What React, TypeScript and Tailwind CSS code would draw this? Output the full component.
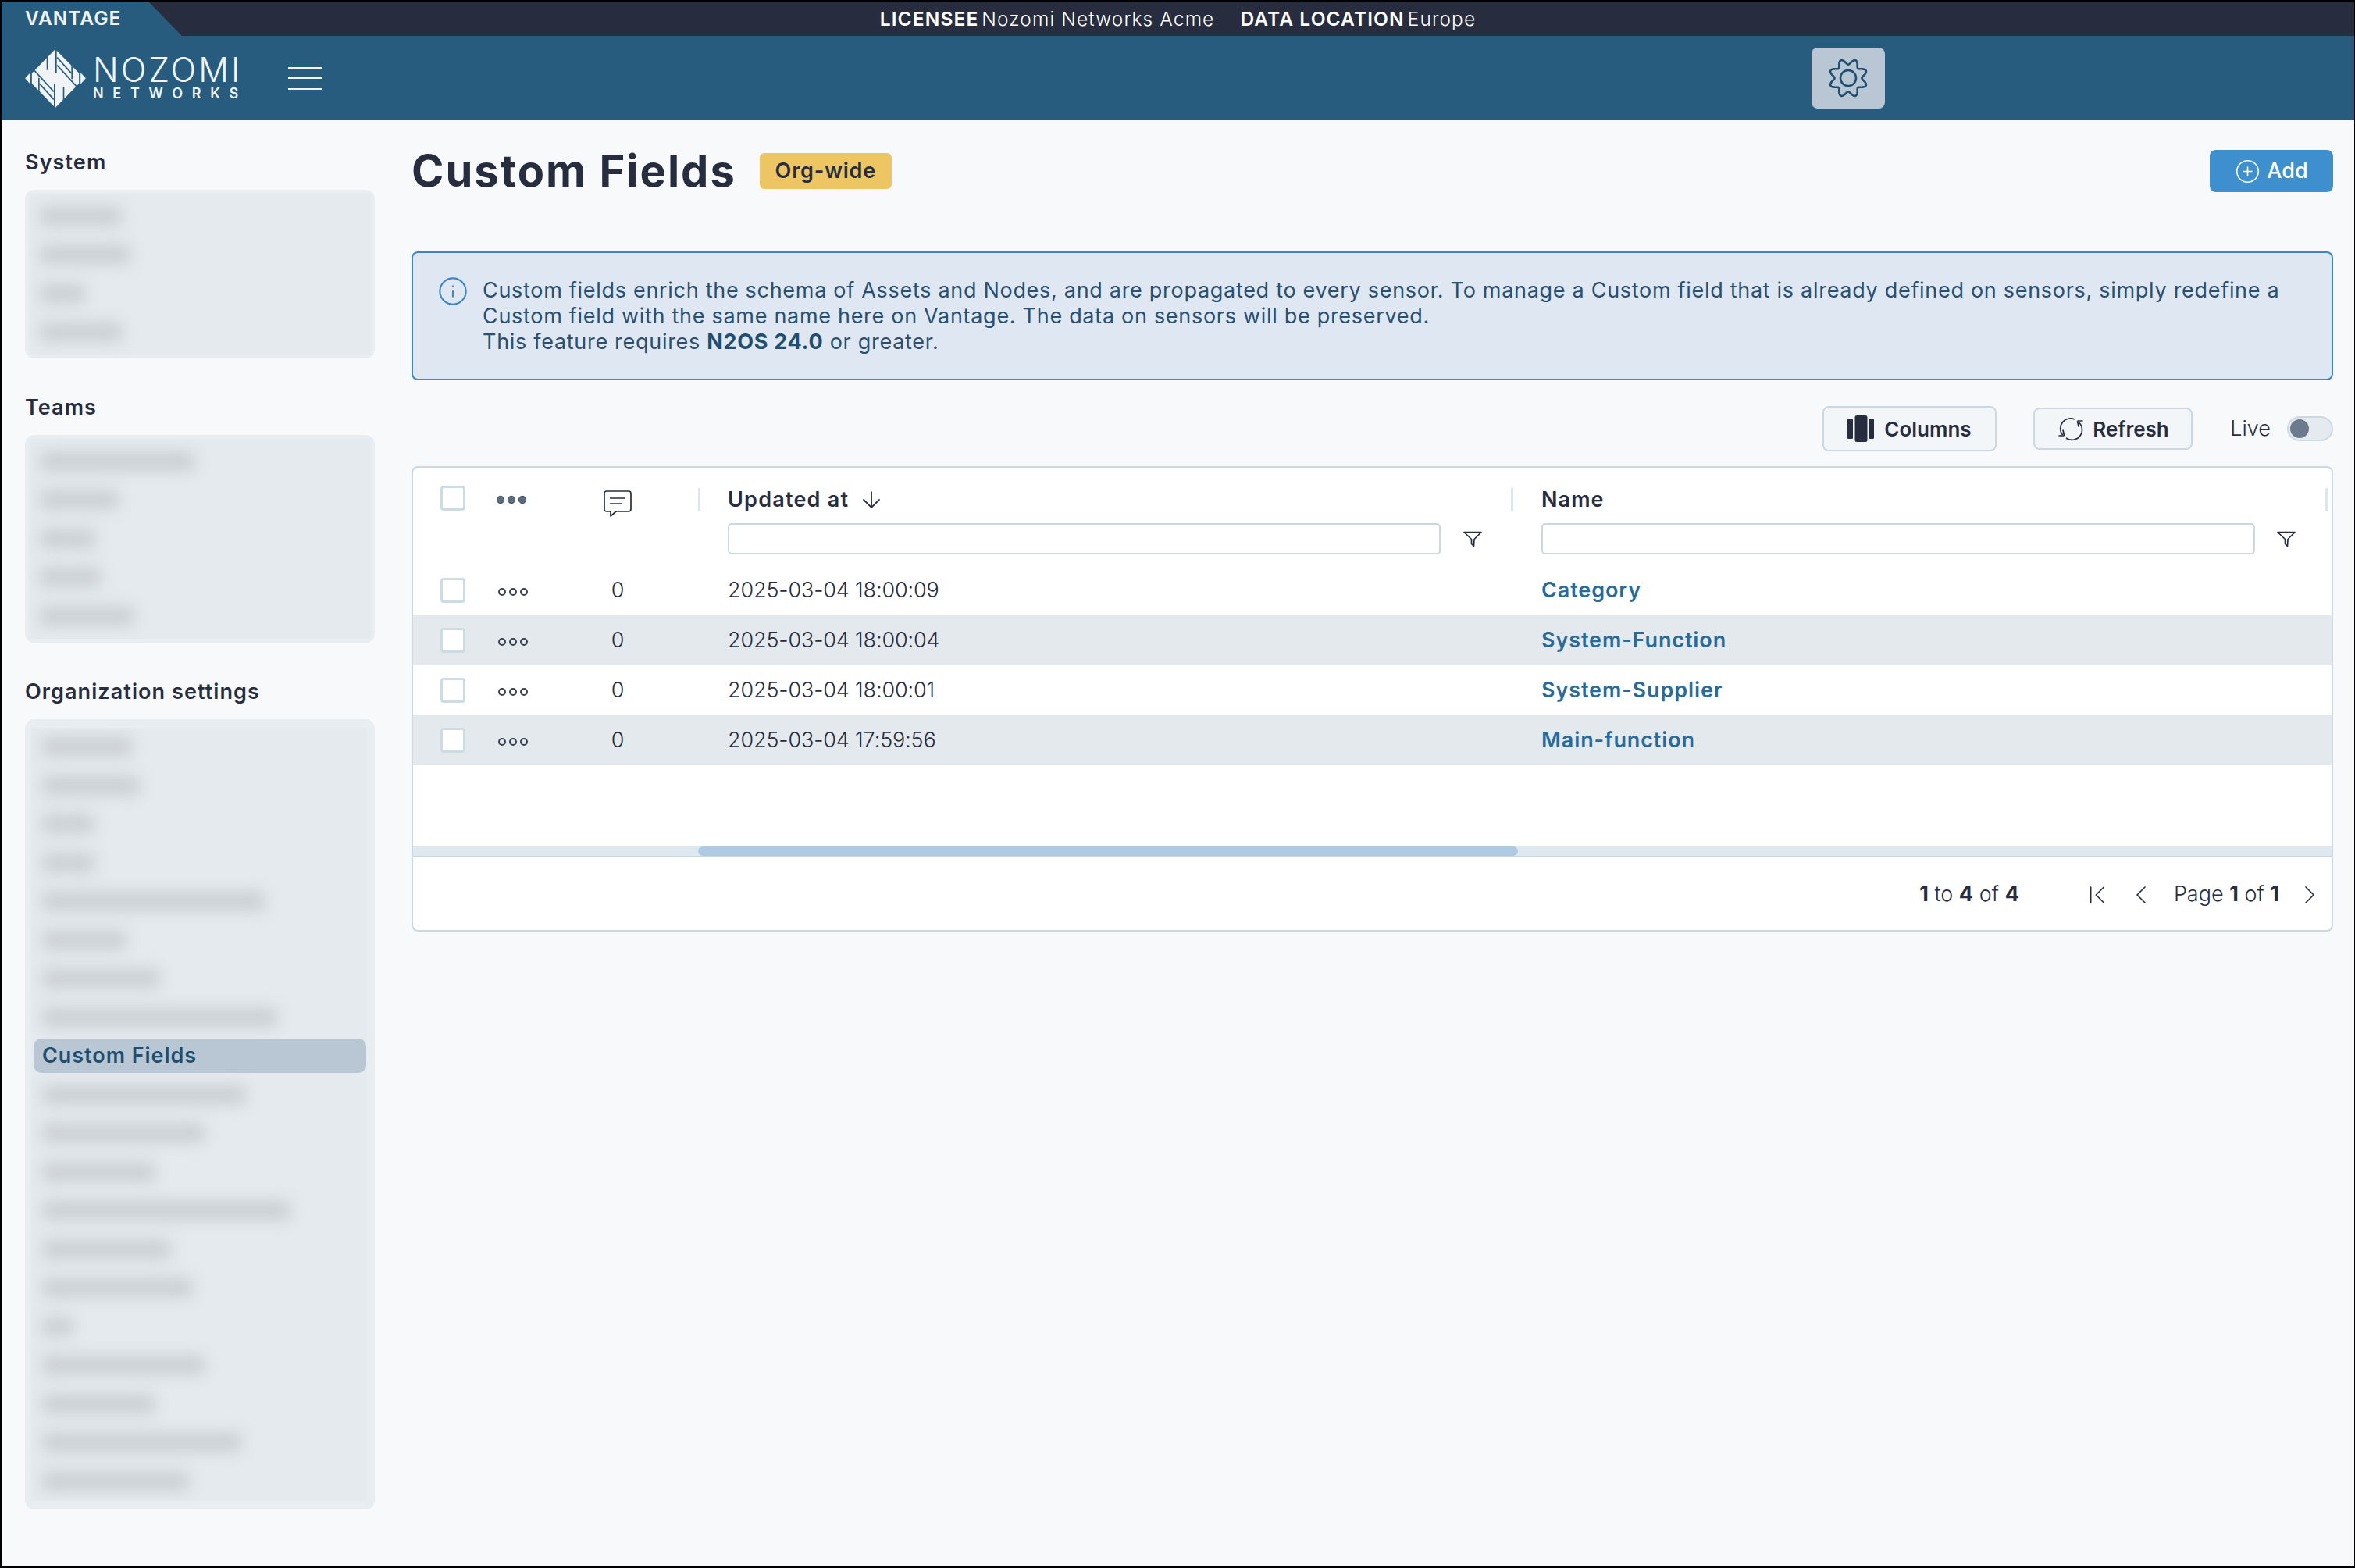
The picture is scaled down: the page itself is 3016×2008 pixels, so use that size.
import { ArrowDown, ChevronFirst, ChevronLeft, ChevronRight, CirclePlus, Info } from 'lucide-react';

const gearPath = (() => {
  const pts: string[] = [];
  for (let i = 0; i < 240; i++) {
    const a = (i / 240) * Math.PI * 2;
    const r = 21 + 3.6 * Math.cos(8 * a + Math.PI);
    pts.push(`${(26 + r * Math.cos(a)).toFixed(2)} ${(26 + r * Math.sin(a)).toFixed(2)}`);
  }
  return `M${pts.join('L')}Z`;
})();

function LogoMark() {
  return (
    <svg width="78" height="75" viewBox="0 0 233 225" className="shrink-0">
      <polygon points="0,112 20,90 20,134" fill="#f0f4f7" />
      <polygon points="233,112 213,90 213,134" fill="#f0f4f7" />
      <polygon points="116,0 207,92 207,132 116,225 26,132 26,92" fill="#f0f4f7" />
      <g stroke="#275c7f" strokeWidth="5" fill="none">
        <path d="M119 -4V92" />
        <path d="M113 132V229" />
        <path d="M85 30V80" />
        <path d="M148 145V195" />
        <path d="M53 110V165" />
        <path d="M180 60V115" />
        <path d="M28 74L110 163" />
        <path d="M205 151L123 62" />
        <path d="M56 133L110 193" />
        <path d="M177 92L123 32" />
      </g>
    </svg>
  );
}

function FilterIcon() {
  return (
    <svg width="24" height="21" viewBox="0 0 24 21" fill="none" stroke="#272d3e" strokeWidth="1.7" strokeLinejoin="round" className="shrink-0">
      <path d="M1 1.5H23L14 10.5L13.5 19.5L10.5 16.5V10.5Z" />
    </svg>
  );
}

function CheckBox() {
  return <div className="w-[32px] h-[32px] bg-white border-[3px] border-b-[4px] border-[#cfdbe3] rounded-[4px]" />;
}

function Dots({ solid }: { solid?: boolean }) {
  return (
    <svg width="42" height="14" viewBox="0 0 42 14">
      {[7, 21, 35].map((x) =>
        solid ? (
          <circle key={x} cx={x - 2} cy="7" r="4.7" fill="#5c6b7d" stroke="#3f4c5e" strokeWidth="1" />
        ) : (
          <circle key={x} cx={x} cy="7" r="4" fill="none" stroke="#3a4354" strokeWidth="2" />
        ),
      )}
    </svg>
  );
}

function BlurRows({ widths }: { widths: string[] }) {
  return (
    <>
      {widths.map((w, i) =>
        w === 'active' ? (
          <div key={i} className="h-[49.5px] flex items-center pl-[3px] pr-[1px]">
            <div className="w-full h-[44px] rounded-[10px] bg-[#b9c7d5] flex items-center pl-[11px] text-[27px] font-semibold text-[#1f4e6e] tracking-[0.035em]">
              Custom Fields
            </div>
          </div>
        ) : (
          <div key={i} className="h-[49.5px] flex items-center">
            <div className={`h-[24px] ml-[14px] rounded-[6px] bg-[#c9ced2] blur-[10px] ${w}`} />
          </div>
        ),
      )}
    </>
  );
}

function SideSection({ title, widths, mt, pad, innerPad }: { title: string; widths: string[]; mt: string; pad: string; innerPad: string }) {
  return (
    <>
      <div className={`h-[36px] leading-[36px] text-[27px] font-semibold text-[#272d3e] tracking-[0.04em] ${mt}`}>{title}</div>
      <div className={`rounded-[12px] bg-[#e8edf1] mt-[17px] ${pad}`}>
        <div className={`bg-[#e5eaee] overflow-hidden ${innerPad}`}>
          <BlurRows widths={widths} />
        </div>
      </div>
    </>
  );
}

const systemRows = ['w-[105px]', 'w-[116px]', 'w-[59px]', 'w-[105px]'];
const teamRows = ['w-[198px]', 'w-[101px]', 'w-[71px]', 'w-[78px]', 'w-[121px]'];
const orgRows = [
  'w-[115px]', 'w-[125px]', 'w-[67px]', 'w-[67px]', 'w-[285px]', 'w-[108px]', 'w-[151px]', 'w-[301px]', 'active',
  'w-[261px]', 'w-[208px]', 'w-[145px]', 'w-[318px]', 'w-[165px]', 'w-[193px]', 'w-[40px]', 'w-[208px]', 'w-[145px]', 'w-[255px]', 'w-[188px]',
];

const rows = [
  ['2025-03-04 18:00:09', 'Category'],
  ['2025-03-04 18:00:04', 'System-Function'],
  ['2025-03-04 18:00:01', 'System-Supplier'],
  ['2025-03-04 17:59:56', 'Main-function'],
];

export default function App() {
  return (
    <div className="w-[3016px] h-[2008px] border-t-2 border-b-2 border-l-2 border-r border-black bg-[#f7f9fb] font-['Inter',sans-serif] text-[#272d3e] flex flex-col overflow-hidden">
      {/* top strip */}
      <div className="relative h-[44px] shrink-0 bg-[#272d3e] flex items-center justify-center text-[24.5px] text-white tracking-[0.045em]">
        <div className="absolute left-0 top-0 w-[231px] h-full bg-[#275c7f] [clip-path:polygon(0_0,188px_0,100%_100%,0_100%)] pl-[30px] flex items-center pb-[2px] text-[24.5px] font-semibold text-[#f0f4f7] tracking-[0.04em]">
          VANTAGE
        </div>
        <span className="font-semibold">LICENSEE</span>
        <span className="ml-[4px] font-light">Nozomi Networks Acme</span>
        <span className="ml-[33px] font-semibold">DATA LOCATION</span>
        <span className="ml-[4px] font-light">Europe</span>
      </div>

      {/* header */}
      <div className="h-[108px] shrink-0 bg-[#275c7f] flex items-center pl-[30px]">
        <LogoMark />
        <div className="ml-[9px] w-[189px] text-[#f0f4f7] whitespace-nowrap">
          <div className="text-[43px] leading-[32px] font-light tracking-[0.07em]">NOZOMI</div>
          <div className="mt-[7px] text-[18px] leading-[16px] font-semibold tracking-[0.65em]">NETWORKS</div>
        </div>
        <div className="ml-[61px] w-[43px] flex flex-col gap-[11.5px]">
          <div className="h-[2px] bg-[#f0f4f7]" />
          <div className="h-[2px] bg-[#f0f4f7]" />
          <div className="h-[2px] bg-[#f0f4f7]" />
        </div>
        <div className="ml-[1908px] w-[94px] h-[78px] rounded-[8px] bg-[#b9c7d5] flex items-center justify-center">
          <svg width="52" height="52" viewBox="0 0 52 52" fill="none" stroke="#1f4e6e" strokeWidth="2.6">
            <path d={gearPath} />
            <circle cx="26" cy="26" r="10" />
          </svg>
        </div>
      </div>

      <div className="flex-1 flex min-h-0">
        {/* sidebar */}
        <div className="w-[448px] ml-[30px] shrink-0 pt-[36px]">
          <SideSection title="System" widths={systemRows} mt="" pad="p-[5px]" innerPad="py-[4px]" />
          <SideSection title="Teams" widths={teamRows} mt="mt-[45px]" pad="p-[5px]" innerPad="py-[4px]" />
          <SideSection title="Organization settings" widths={orgRows} mt="mt-[45px]" pad="pt-[11px] pr-[10px] pb-[11px] pl-[8px]" innerPad="" />
        </div>

        {/* main */}
        <div className="w-[2461px] ml-[47px] shrink-0">
          <div className="mt-[38px] h-[54px] flex items-center">
            <div className="text-[56px] font-bold tracking-[0.036em] leading-[54px]">Custom Fields</div>
            <div className="ml-[30px] h-[46px] w-[169px] rounded-[6px] bg-[#edc562] flex items-center justify-center text-[27px] font-semibold tracking-[0.03em]">
              Org-wide
            </div>
            <div className="ml-auto w-[158px] h-[54px] rounded-[8px] bg-[#3e8fcd] text-white flex items-center justify-center gap-[8px] text-[27px] font-medium">
              <CirclePlus size={33} strokeWidth={1.2} />
              Add
            </div>
          </div>

          <div className="mt-[76px] h-[165px] rounded-[8px] border-2 border-[#3e85c5] bg-[#dfe8f2] flex pl-[31px] pt-[31px] text-[27px] leading-[33px] text-[#2a4f70] tracking-[0.026em]">
            <Info size={40} strokeWidth={1.25} className="text-[#3e85c5] shrink-0 -mt-[2px]" />
            <div className="ml-[18px] whitespace-nowrap">
              Custom fields enrich the schema of Assets and Nodes, and are propagated to every sensor. To manage a Custom field that is already defined on sensors, simply redefine a
              <br />
              Custom field with the same name here on Vantage. The data on sensors will be preserved.
              <br />
              This feature requires <span className="font-bold text-[#1f4e6e]">N2OS 24.0</span> or greater.
            </div>
          </div>

          <div className="mt-[33px] h-[58px] flex items-center justify-end">
            <div className="w-[223px] h-[58px] rounded-[8px] border-2 border-[#cbd8e1] bg-[#f2f6f9] flex items-center pl-[30px] gap-[13px] text-[26px] font-semibold">
              <svg width="34" height="34" viewBox="0 0 34 34" fill="#272d3e" className="shrink-0">
                <rect x="0" y="4" width="7" height="26" rx="1.5" />
                <rect x="9.5" y="0" width="16" height="34" rx="2.5" />
                <rect x="27.5" y="4" width="6.5" height="26" rx="1.5" />
              </svg>
              Columns
            </div>
            <div className="ml-[47px] w-[204px] h-[54px] rounded-[8px] border-2 border-[#cbd8e1] bg-[#f2f6f9] flex items-center pl-[30px] gap-[12px] text-[26px] font-semibold">
              <svg width="32" height="32" viewBox="0 0 32 32" fill="none" stroke="#272d3e" strokeWidth="1.7" className="shrink-0">
                <path d="M21 4A13 13 0 0 0 5.5 24" />
                <path d="M10 28A13 13 0 0 0 26.5 8" />
                <path d="M0.5 25H7.5M6 17.5L7.5 25" />
                <path d="M31.5 6H24.5M26 13.5L24.5 6" />
              </svg>
              Refresh
            </div>
            <div className="ml-[48px] text-[27px] font-light">Live</div>
            <div className="ml-[21px] w-[59px] h-[32px] rounded-full border-2 border-[#cdd9e2] bg-[#e4eaef] flex items-center pl-[2px]">
              <div className="w-[24px] h-[24px] rounded-full bg-[#6b7a8d]" />
            </div>
          </div>

          {/* table */}
          <div className="mt-[19px] h-[596px] rounded-[8px] border-2 border-[#cbd8e1] bg-white flex flex-col overflow-hidden">
            <div className="h-[125px] shrink-0 pt-[21px] grid grid-cols-[107px_104px_102px_90px_1042px_1012px]">
              <div className="pl-[35px] pt-[2px]">
                <CheckBox />
              </div>
              <div className="h-[40px] flex items-center">
                <Dots solid />
              </div>
              <div className="h-[40px] pt-[8px] flex justify-center">
                <svg width="36" height="36" viewBox="0 0 36 36" fill="none" stroke="#272d3e" strokeWidth="1.7" strokeLinejoin="round">
                  <path d="M4 1H32Q35 1 35 4V24Q35 27 32 27H16L9 33V27H4Q1 27 1 24V4Q1 1 4 1Z" />
                  <path d="M8 10H27" />
                  <path d="M8 17H24" />
                </svg>
              </div>
              <div className="h-[40px] flex items-center pl-[52px]">
                <div className="w-[3px] h-[30px] bg-[#dfe5ee]" />
              </div>
              <div>
                <div className="w-[1006px] h-[40px] flex items-center justify-between">
                  <div className="flex items-center gap-[12px] text-[27px] font-semibold tracking-[0.045em]">
                    Updated at
                    <ArrowDown size={34} strokeWidth={1.3} />
                  </div>
                  <div className="w-[3px] h-[30px] bg-[#dfe5ee]" />
                </div>
                <div className="mt-[10px] flex items-center gap-[29px]">
                  <div className="w-[913px] h-[40px] rounded-[5px] border-2 border-[#cbd8e1] bg-white" />
                  <FilterIcon />
                </div>
              </div>
              <div>
                <div className="w-[1007px] h-[40px] flex items-center justify-between">
                  <div className="text-[27px] font-semibold tracking-[0.04em]">Name</div>
                  <div className="w-[3px] h-[30px] bg-[#dfe5ee]" />
                </div>
                <div className="mt-[10px] flex items-center gap-[28px]">
                  <div className="w-[914px] h-[40px] rounded-[5px] border-2 border-[#cbd8e1] bg-white" />
                  <FilterIcon />
                </div>
              </div>
            </div>

            {rows.map(([date, name], i) => (
              <div
                key={name}
                className={`h-[64px] shrink-0 grid grid-cols-[107px_104px_102px_90px_1042px_1012px] items-center ${i % 2 ? 'bg-[#e4e9ee]' : 'bg-white'}`}
              >
                <div className="pl-[35px]">
                  <CheckBox />
                </div>
                <div className="pt-[3px]">
                  <Dots />
                </div>
                <div className="text-center text-[27px] font-light">0</div>
                <div />
                <div className="text-[27px] font-light tracking-[-0.005em]">{date}</div>
                <div className="text-[27px] font-semibold text-[#2a6a98] tracking-[0.033em]">{name}</div>
              </div>
            ))}

            <div className="flex-1" />
            <div className="h-[12px] shrink-0 bg-[#dfe7ef]">
              <div className="ml-[365px] w-[1050px] h-full rounded-full bg-[#aecbe3]" />
            </div>
            <div className="h-[2px] shrink-0 bg-[#cbd8e1]" />
            <div className="h-[93px] shrink-0 flex items-center justify-end pr-[8px] pt-[2px] text-[27px] font-light">
              <span>
                <b className="font-bold">1</b> to <b className="font-bold">4</b> of <b className="font-bold">4</b>
              </span>
              <ChevronFirst size={40} strokeWidth={1} className="ml-[80px]" />
              <ChevronLeft size={40} strokeWidth={1} className="ml-[16px]" />
              <span className="ml-[22px]">
                Page <b className="font-bold">1</b> of <b className="font-bold">1</b>
              </span>
              <ChevronRight size={40} strokeWidth={1} className="ml-[19px]" />
            </div>
          </div>
        </div>
      </div>
    </div>
  );
}
